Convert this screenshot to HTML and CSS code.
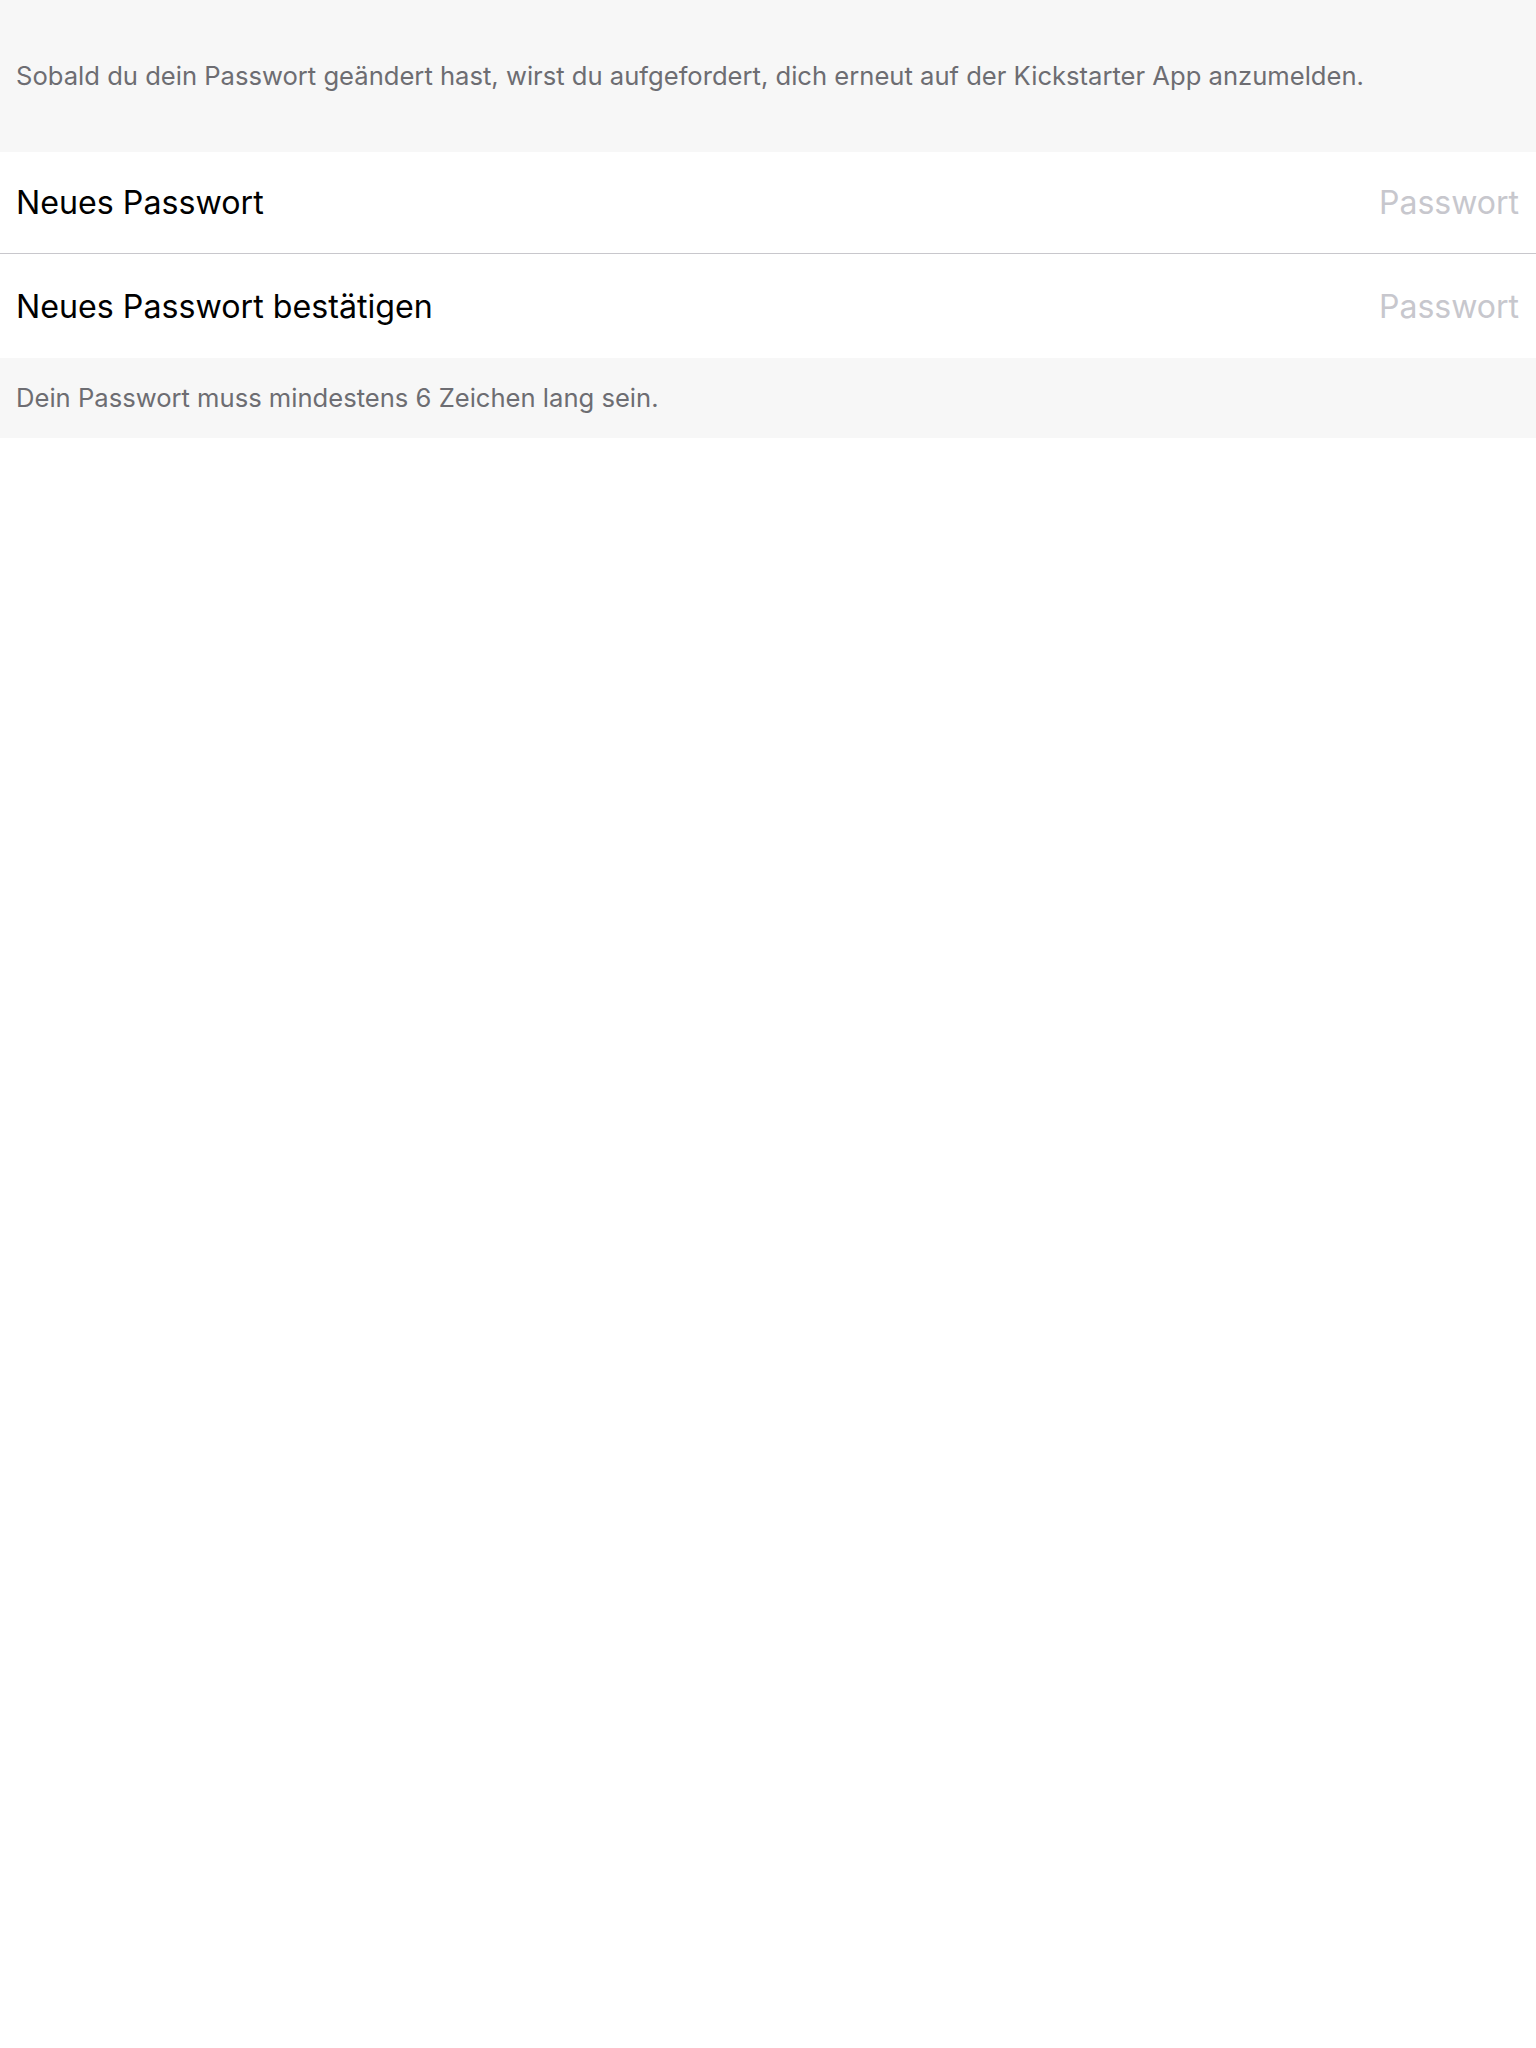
FILE: index.html
```html
<!DOCTYPE html>
<html lang="de">
<head>
<meta charset="utf-8">
<title>Passwort ändern</title>
<link rel="stylesheet" href="styles.css">
</head>
<body>
<div class="screen">
  <div class="section-header">
    <p class="note">Sobald du dein Passwort geändert hast, wirst du aufgefordert, dich erneut auf der Kickstarter App anzumelden.</p>
  </div>
  <div class="group">
    <div class="row">
      <span class="label">Neues Passwort</span>
      <span class="placeholder">Passwort</span>
    </div>
    <div class="divider"></div>
    <div class="row row-second">
      <span class="label">Neues Passwort bestätigen</span>
      <span class="placeholder">Passwort</span>
    </div>
  </div>
  <div class="section-footer">
    <p class="note">Dein Passwort muss mindestens 6 Zeichen lang sein.</p>
  </div>
</div>
</body>
</html>
```

FILE: styles.css
```css
html, body {
  margin: 0;
  padding: 0;
  background: #ffffff;
}
body {
  font-family: Inter, "Noto Sans", "Liberation Sans", sans-serif;
  width: 1536px;
  min-height: 2048px;
}
.screen {
  display: flex;
  flex-direction: column;
}
.section-header {
  background: #f7f7f7;
  height: 152px;
  display: flex;
  align-items: center;
  padding: 0 16px 2px 16px;
  box-sizing: border-box;
}
.note {
  margin: 0;
  font-size: 25.6px;
  color: #6d6d72;
  letter-spacing: 0;
}
.group {
  display: flex;
  flex-direction: column;
  background: #fff;
}
.row {
  height: 101px;
  display: flex;
  align-items: center;
  justify-content: space-between;
  padding: 0 17px 0 16px;
  box-sizing: border-box;
}
.row-second {
  height: 104px;
}
.divider {
  height: 1px;
  background: #c8c7cc;
  flex-shrink: 0;
}
.label {
  font-size: 32.2px;
  color: #000;
}
.placeholder {
  font-size: 32px;
  color: #c7c7cd;
}
.section-footer {
  background: #f7f7f7;
  height: 80px;
  display: flex;
  align-items: center;
  padding: 0 16px 2px 16px;
  box-sizing: border-box;
}
```
